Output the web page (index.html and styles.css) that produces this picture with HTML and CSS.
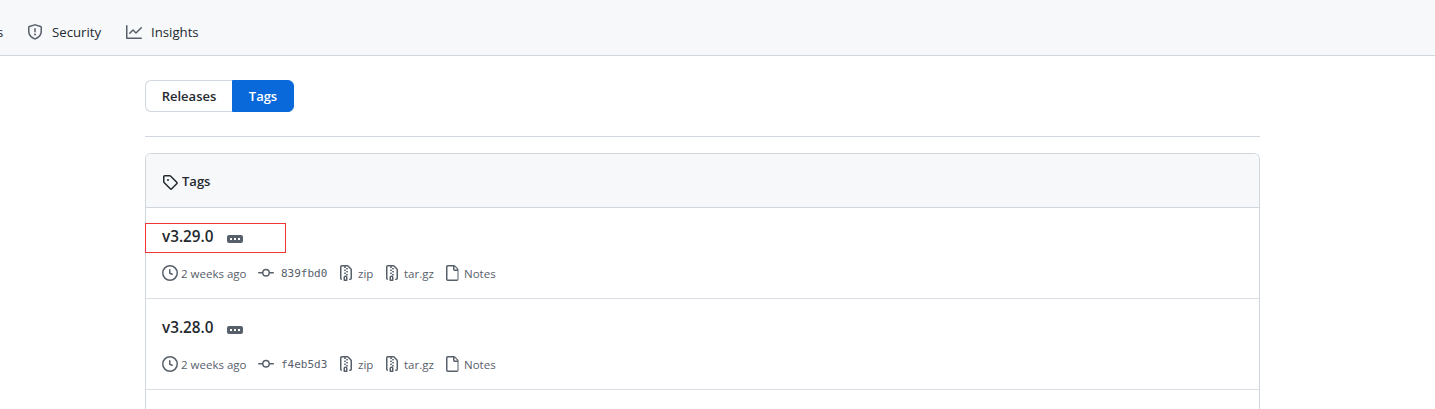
FILE: index.html
```html
<!DOCTYPE html>
<html lang="en">
<head>
<meta charset="utf-8">
<title>Tags</title>
<link rel="stylesheet" href="styles.css">
</head>
<body>
<svg class="defs" aria-hidden="true">
<symbol id="shield" viewBox="0 0 16 16"><path fill-rule="evenodd" d="M7.467.133a1.75 1.75 0 011.066 0l5.25 1.68A1.75 1.75 0 0115 3.48V7c0 1.566-.32 3.182-1.303 4.682-.983 1.498-2.585 2.813-5.032 3.855a1.7 1.7 0 01-1.33 0c-2.447-1.042-4.049-2.357-5.032-3.855C1.32 10.182 1 8.566 1 7V3.48a1.75 1.75 0 011.217-1.667l5.25-1.68zm.61 1.429a.25.25 0 00-.153 0l-5.25 1.68a.25.25 0 00-.174.238V7c0 1.358.275 2.666 1.057 3.86.784 1.194 2.121 2.34 4.366 3.297a.2.2 0 00.154 0c2.245-.956 3.582-2.104 4.366-3.298C13.225 9.666 13.5 8.36 13.5 7V3.48a.25.25 0 00-.174-.237l-5.25-1.68zM9 10.5a1 1 0 11-2 0 1 1 0 012 0zm-.25-5.75a.75.75 0 10-1.5 0v3a.75.75 0 001.5 0v-3z"/></symbol>
<symbol id="graph" viewBox="0 0 16 16"><path fill-rule="evenodd" d="M1.5 1.75a.75.75 0 00-1.5 0v12.5c0 .414.336.75.75.75h14.5a.75.75 0 000-1.5H1.5V1.75zm14.28 2.53a.75.75 0 00-1.06-1.06L10 7.94 7.53 5.47a.75.75 0 00-1.06 0L3.22 8.72a.75.75 0 001.06 1.06L7 7.06l2.47 2.47a.75.75 0 001.06 0l5.25-5.25z"/></symbol>
<symbol id="tag" viewBox="0 0 16 16"><path fill-rule="evenodd" d="M2.5 7.775V2.75a.25.25 0 01.25-.25h5.025a.25.25 0 01.177.073l6.25 6.25a.25.25 0 010 .354l-5.025 5.025a.25.25 0 01-.354 0l-6.25-6.25a.25.25 0 01-.073-.177zm-1.5 0V2.75C1 1.784 1.784 1 2.75 1h5.025c.464 0 .91.184 1.238.513l6.25 6.25a1.75 1.75 0 010 2.474l-5.026 5.026a1.75 1.75 0 01-2.474 0l-6.25-6.25A1.75 1.75 0 011 7.775zM6 5a1 1 0 100 2 1 1 0 000-2z"/></symbol>
<symbol id="clock" viewBox="0 0 16 16"><path fill-rule="evenodd" d="M1.5 8a6.5 6.5 0 1113 0 6.5 6.5 0 01-13 0zM8 0a8 8 0 100 16A8 8 0 008 0zm.5 4.75a.75.75 0 00-1.5 0v3.5a.75.75 0 00.471.696l2.5 1a.75.75 0 00.557-1.392L8.5 7.742V4.75z"/></symbol>
<symbol id="commit" viewBox="0 0 16 16"><path fill-rule="evenodd" d="M10.5 7.75a2.5 2.5 0 11-5 0 2.5 2.5 0 015 0zm1.43.75a4.002 4.002 0 01-7.86 0H.75a.75.75 0 110-1.5h3.32a4.001 4.001 0 017.86 0h3.32a.75.75 0 110 1.5h-3.32z"/></symbol>
<symbol id="zip" viewBox="0 0 16 16"><path fill-rule="evenodd" d="M3.5 1.75a.25.25 0 01.25-.25h3a.75.75 0 000 1.5h.5a.75.75 0 000-1.5h2.086a.25.25 0 01.177.073l2.914 2.914a.25.25 0 01.073.177v8.586a.25.25 0 01-.25.25h-.5a.75.75 0 000 1.5h.5A1.75 1.75 0 0014 13.25V4.664c0-.464-.184-.909-.513-1.237L10.573.513A1.75 1.75 0 009.336 0H3.75A1.75 1.75 0 002 1.75v11.5c0 .649.353 1.214.874 1.515a.75.75 0 10.752-1.298.25.25 0 01-.126-.217V1.75zM8.75 3a.75.75 0 000 1.5h.5a.75.75 0 000-1.5h-.5zM6 5.25a.75.75 0 01.75-.75h.5a.75.75 0 010 1.5h-.5A.75.75 0 016 5.25zm2 1.5A.75.75 0 018.75 6h.5a.75.75 0 010 1.5h-.5A.75.75 0 018 6.75zm-1.25.75a.75.75 0 000 1.5h.5a.75.75 0 000-1.5h-.5zM8 9.75A.75.75 0 018.75 9h.5a.75.75 0 010 1.5h-.5A.75.75 0 018 9.75zm-.75.75a1.75 1.75 0 00-1.75 1.75v3c0 .414.336.75.75.75h2.5a.75.75 0 00.75-.75v-3a1.75 1.75 0 00-1.75-1.75h-.5zM7 12.25a.25.25 0 01.25-.25h.5a.25.25 0 01.25.25v2.25H7v-2.25z"/></symbol>
<symbol id="file" viewBox="0 0 16 16"><path fill-rule="evenodd" d="M3.75 1.5a.25.25 0 00-.25.25v12.5c0 .138.112.25.25.25h9.5a.25.25 0 00.25-.25V6h-2.75A1.75 1.75 0 019 4.25V1.5H3.75zm6.75.062V4.25c0 .138.112.25.25.25h2.688a.252.252 0 00-.011-.013l-2.914-2.914a.272.272 0 00-.013-.011zM2 1.75C2 .784 2.784 0 3.75 0h6.086c.464 0 .909.184 1.237.513l2.914 2.914c.329.328.513.773.513 1.237v9.586A1.75 1.75 0 0112.75 16h-9A1.75 1.75 0 012 14.25V1.75z"/></symbol>
</svg>
<nav class="nav">
  <span class="nav-cut">s</span>
  <svg class="icon"><use href="#shield"/></svg><span class="nav-label security">Security</span>
  <svg class="icon"><use href="#graph"/></svg><span class="nav-label insights">Insights</span>
</nav>
<main class="main">
  <div class="tabs"><a class="tab tab-releases">Releases</a><a class="tab tab-tags">Tags</a></div>
  <section class="box">
    <header class="box-header"><svg class="icon"><use href="#tag"/></svg><span>Tags</span></header>
    <article class="row">
      <h2 class="version"><span class="version-name">v3.29.0</span><span class="dots"><i></i><i></i><i></i></span><span class="highlight"></span></h2>
      <div class="meta">
        <svg class="icon"><use href="#clock"/></svg><span class="age">2 weeks ago</span>
        <svg class="icon"><use href="#commit"/></svg><span class="hash">839fbd0</span>
        <svg class="icon"><use href="#zip"/></svg><span class="zip">zip</span>
        <svg class="icon"><use href="#zip"/></svg><span class="tar">tar.gz</span>
        <svg class="icon"><use href="#file"/></svg><span class="notes">Notes</span>
      </div>
    </article>
    <article class="row">
      <h2 class="version"><span class="version-name">v3.28.0</span><span class="dots"><i></i><i></i><i></i></span></h2>
      <div class="meta">
        <svg class="icon"><use href="#clock"/></svg><span class="age">2 weeks ago</span>
        <svg class="icon"><use href="#commit"/></svg><span class="hash">f4eb5d3</span>
        <svg class="icon"><use href="#zip"/></svg><span class="zip">zip</span>
        <svg class="icon"><use href="#zip"/></svg><span class="tar">tar.gz</span>
        <svg class="icon"><use href="#file"/></svg><span class="notes">Notes</span>
      </div>
    </article>
  </section>
</main>
</body>
</html>
```
FILE: styles.css
```css
* { box-sizing: border-box; }
body {
  margin: 0;
  height: 409px;
  overflow: hidden;
  background: #fff;
  color: #24292f;
  font: 13px/20px "Open Sans", "Noto Sans", sans-serif;
}
.defs { display: none; }
.icon { width: 16px; height: 16px; flex: none; fill: #57606a; }
span { white-space: nowrap; }

.nav {
  display: flex;
  align-items: center;
  height: 56px;
  padding-top: 9px;
  background: #f6f8fa;
  border-bottom: 1px solid #d0d7de;
}
.nav-cut { width: 27px; margin-left: -3px; margin-right: 3px; }
.nav-label { margin-left: 9px; font-size: 13.2px; }
.security { width: 65px; margin-right: 9px; }

.main { width: 1115px; margin-left: 145px; }
.tabs {
  display: flex;
  height: 81px;
  padding: 24px 0;
  border-bottom: 1px solid #d0d7de;
}
.tab {
  height: 32px;
  line-height: 30px;
  border: 1px solid #d0d7de;
  font-weight: 600;
  text-align: center;
}
.tab-releases { width: 87px; border-right: 0; border-radius: 6px 0 0 6px; }
.tab-tags { width: 62px; border-color: #0969da; background: #0969da; color: #fff; border-radius: 0 6px 6px 0; }

.box {
  height: 256px;
  margin-top: 16px;
  border: 1px solid #d0d7de;
  border-bottom: 0;
  border-radius: 6px 6px 0 0;
}
.box-header {
  display: flex;
  align-items: center;
  gap: 4px;
  height: 54px;
  padding: 2px 16px 0;
  background: #f6f8fa;
  border-bottom: 1px solid #d0d7de;
  border-radius: 5px 5px 0 0;
  font-weight: 600;
}
.box-header .icon { fill: #24292f; }
.box-header span { padding-bottom: 2px; }
.row { height: 91px; padding: 16px; border-bottom: 1px solid #d8dee4; }
.version {
  position: relative;
  display: flex;
  height: 24px;
  margin: 0;
  font-size: 15.3px;
  line-height: 24px;
  font-weight: 600;
}
.version-name { width: 65px; }
.dots {
  display: flex;
  align-items: center;
  justify-content: center;
  gap: 2px;
  width: 16px;
  height: 8px;
  margin-top: 11px;
  border-radius: 2px;
  background: #57606a;
}
.dots i { width: 2px; height: 2px; background: #fff; }
.highlight {
  position: absolute;
  left: -17px;
  top: -1px;
  width: 141px;
  height: 30px;
  border: 1px solid #ef3737;
}
.meta {
  display: flex;
  align-items: center;
  height: 18px;
  margin-top: 16px;
  color: #57606a;
  font-size: 11.5px;
}
.meta span { padding-top: 2px; }
.age { width: 77px; margin-left: 3px; }
.hash { width: 51px; margin-left: 7px; font: 11px/18px "DejaVu Sans Mono", monospace; }
.hash + .icon { margin-left: 6px; }
.zip { width: 23px; margin-left: 4px; }
.zip + .icon { margin-left: 3px; }
.tar { width: 40px; margin-left: 4px; }
.notes { margin-left: 4px; }
```
